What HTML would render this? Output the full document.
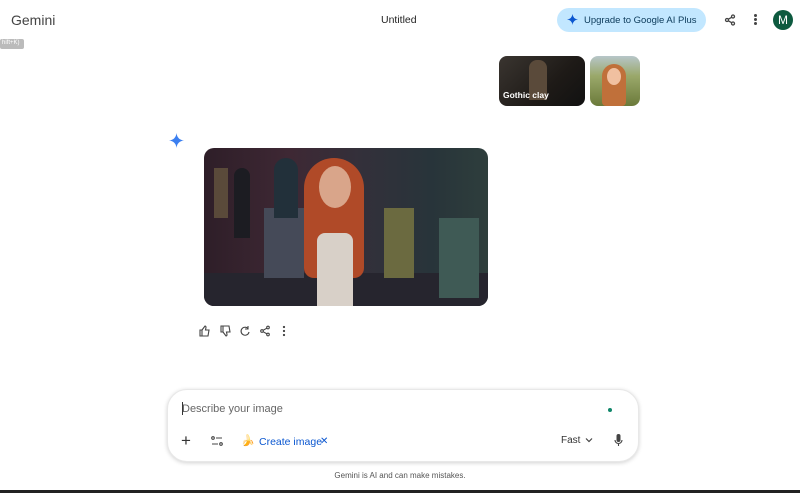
<!DOCTYPE html>
<html><head><style>
*{margin:0;padding:0;box-sizing:border-box}
body{width:800px;height:493px;background:#fff;font-family:"Liberation Sans",sans-serif;position:relative;overflow:hidden;color:#1f1f1f}
.a{position:absolute}
</style></head><body>
<div class="a" style="left:11px;top:12px;font-size:14px;color:#444">Gemini</div>
<div class="a" style="left:381px;top:14px;font-size:10.5px;color:#1f1f1f">Untitled</div>
<div class="a" style="left:557px;top:8px;width:149px;height:24px;border-radius:12px;background:#c2e7ff;font-size:9.5px;color:#0b3a5a;padding:7px 0 0 27px">Upgrade to Google AI Plus</div>
<svg class="a" style="left:567px;top:14px" width="11" height="11" viewBox="0 0 12 12"><path d="M6 0Q6.6 5.4 12 6Q6.6 6.6 6 12Q5.4 6.6 0 6Q5.4 5.4 6 0Z" fill="#0b57d0"/></svg>
<svg class="a" style="left:724px;top:14px" width="12" height="12" viewBox="0 0 12 12" fill="none" stroke="#444" stroke-width="1.3"><circle cx="9" cy="2.5" r="1.5"/><circle cx="3" cy="6" r="1.5"/><circle cx="9" cy="9.5" r="1.5"/><path d="M4.3 5.2 7.7 3.3M4.3 6.8 7.7 8.7"/></svg>
<div class="a" style="left:754px;top:14px;width:3px;height:3px;background:#444;border-radius:50%;box-shadow:0 4px #444,0 8px #444"></div>
<div class="a" style="left:773px;top:10px;width:20px;height:20px;border-radius:50%;background:#0d5a3f;color:#fff;font-size:12px;text-align:center;line-height:20px">M</div>
<div class="a" style="left:0;top:39px;width:24px;height:10px;background:#bbb;border-radius:2px;font-size:6px;color:#fff;padding:1px 2px">hift+K)</div>
<div class="a" style="left:499px;top:56px;width:86px;height:50px;border-radius:8px;background:linear-gradient(135deg,#3a3530,#1e1a17 60%,#111);overflow:hidden"><div class="a" style="left:30px;top:4px;width:18px;height:40px;background:#5a4a3a;border-radius:8px 8px 0 0"></div><div class="a" style="left:4px;top:34px;font-size:8.5px;color:#fff;font-weight:bold">Gothic clay</div></div>
<div class="a" style="left:590px;top:56px;width:50px;height:50px;border-radius:8px;background:linear-gradient(180deg,#b7c6c9 0%,#9aa86a 40%,#6b7a3a 100%);overflow:hidden"><div class="a" style="left:12px;top:8px;width:24px;height:42px;background:#c0703a;border-radius:12px 12px 4px 4px"></div><div class="a" style="left:17px;top:12px;width:14px;height:17px;background:#f0c0a0;border-radius:50%"></div></div>
<svg class="a" style="left:169px;top:133px" width="15" height="15" viewBox="0 0 12 12"><path d="M6 0Q6.6 5.4 12 6Q6.6 6.6 6 12Q5.4 6.6 0 6Q5.4 5.4 6 0Z" fill="#3b7ff0"/></svg>
<div class="a" style="left:204px;top:148px;width:284px;height:158px;border-radius:10px;overflow:hidden;background:linear-gradient(90deg,#2e1e28 0%,#3e2834 30%,#33303a 55%,#28343a 80%,#2e3e3c 100%)">
<div class="a" style="left:0;top:125px;width:284px;height:33px;background:#26252e"></div>
<div class="a" style="left:10px;top:20px;width:14px;height:50px;background:#5a4a3a"></div>
<div class="a" style="left:30px;top:20px;width:16px;height:70px;background:#1c1c22;border-radius:8px 8px 0 0"></div>
<div class="a" style="left:60px;top:60px;width:40px;height:70px;background:#454a58"></div>
<div class="a" style="left:70px;top:10px;width:24px;height:60px;background:#22303a;border-radius:12px 12px 0 0"></div>
<div class="a" style="left:180px;top:60px;width:30px;height:70px;background:#6b6a40"></div>
<div class="a" style="left:235px;top:70px;width:40px;height:80px;background:#3f5a55"></div>
<div class="a" style="left:100px;top:10px;width:60px;height:120px;background:#b04a28;border-radius:30px 30px 10px 10px"></div>
<div class="a" style="left:115px;top:18px;width:32px;height:42px;background:#d9a58a;border-radius:50%"></div>
<div class="a" style="left:113px;top:85px;width:36px;height:73px;background:#d8d0c8;border-radius:8px 8px 0 0"></div>
</div>
<svg class="a" style="left:199px;top:325px" width="92" height="12" viewBox="0 0 92 12" fill="none" stroke="#444" stroke-width="1.1"><path d="M1 5h2v6H1zM3 5l3-4q1 0 1 1.5L6.5 5H10l-1 6H3"/><path d="M22 7h2V1h-2zM24 7l3 4q1 0 1-1.5L27.5 7H31l-1-6h-6"/><path d="M49 3.5A4 4 0 1 0 50 7M49 1v3h-3"/><circle cx="69" cy="2.5" r="1.3"/><circle cx="63" cy="6" r="1.3"/><circle cx="69" cy="9.5" r="1.3"/><path d="M64 5.3l4-2.2M64 6.7l4 2.2"/><circle cx="85" cy="2" r=".6" fill="#444"/><circle cx="85" cy="6" r=".6" fill="#444"/><circle cx="85" cy="10" r=".6" fill="#444"/></svg>
<div class="a" style="left:167px;top:389px;width:472px;height:73px;border-radius:20px;background:#fff;box-shadow:0 1px 4px rgba(0,0,0,.18);border:1px solid #e8e8e8"></div>
<div class="a" style="left:182px;top:402px;width:1px;height:13px;background:#333"></div>
<div class="a" style="left:182px;top:403px;font-size:11px;color:#666">Describe your image</div>
<div class="a" style="left:608px;top:408px;width:4px;height:4px;border-radius:50%;background:#10866a"></div>
<div class="a" style="left:181px;top:431px;font-size:17px;color:#333">+</div>
<svg class="a" style="left:211px;top:436px" width="12" height="10" viewBox="0 0 12 10" fill="none" stroke="#444" stroke-width="1.1"><circle cx="2" cy="2" r="1.3"/><path d="M5 2h6M1 8h6"/><circle cx="10" cy="8" r="1.3"/></svg>
<div class="a" style="left:241px;top:434px;font-size:11px">🍌</div>
<div class="a" style="left:259px;top:436px;font-size:10.5px;color:#0b57d0">Create image</div>
<div class="a" style="left:320px;top:436px;font-size:10px;color:#0b57d0">✕</div>
<div class="a" style="left:561px;top:435px;font-size:10px;color:#333">Fast</div>
<svg class="a" style="left:585px;top:437px" width="8" height="6" viewBox="0 0 8 6" fill="none" stroke="#444" stroke-width="1.2"><path d="M1 1.5l3 3 3-3"/></svg>
<svg class="a" style="left:614px;top:434px" width="9" height="13" viewBox="0 0 9 13"><rect x="2.5" y="0" width="4" height="8" rx="2" fill="#444"/><path d="M1 6a3.5 3.5 0 0 0 7 0M4.5 9.5V12" stroke="#444" stroke-width="1.1" fill="none"/></svg>
<div class="a" style="left:0;top:471px;width:800px;text-align:center;font-size:8px;color:#555">Gemini is AI and can make mistakes.</div>
<div class="a" style="left:0;top:490px;width:800px;height:3px;background:#222"></div>
</body></html>
